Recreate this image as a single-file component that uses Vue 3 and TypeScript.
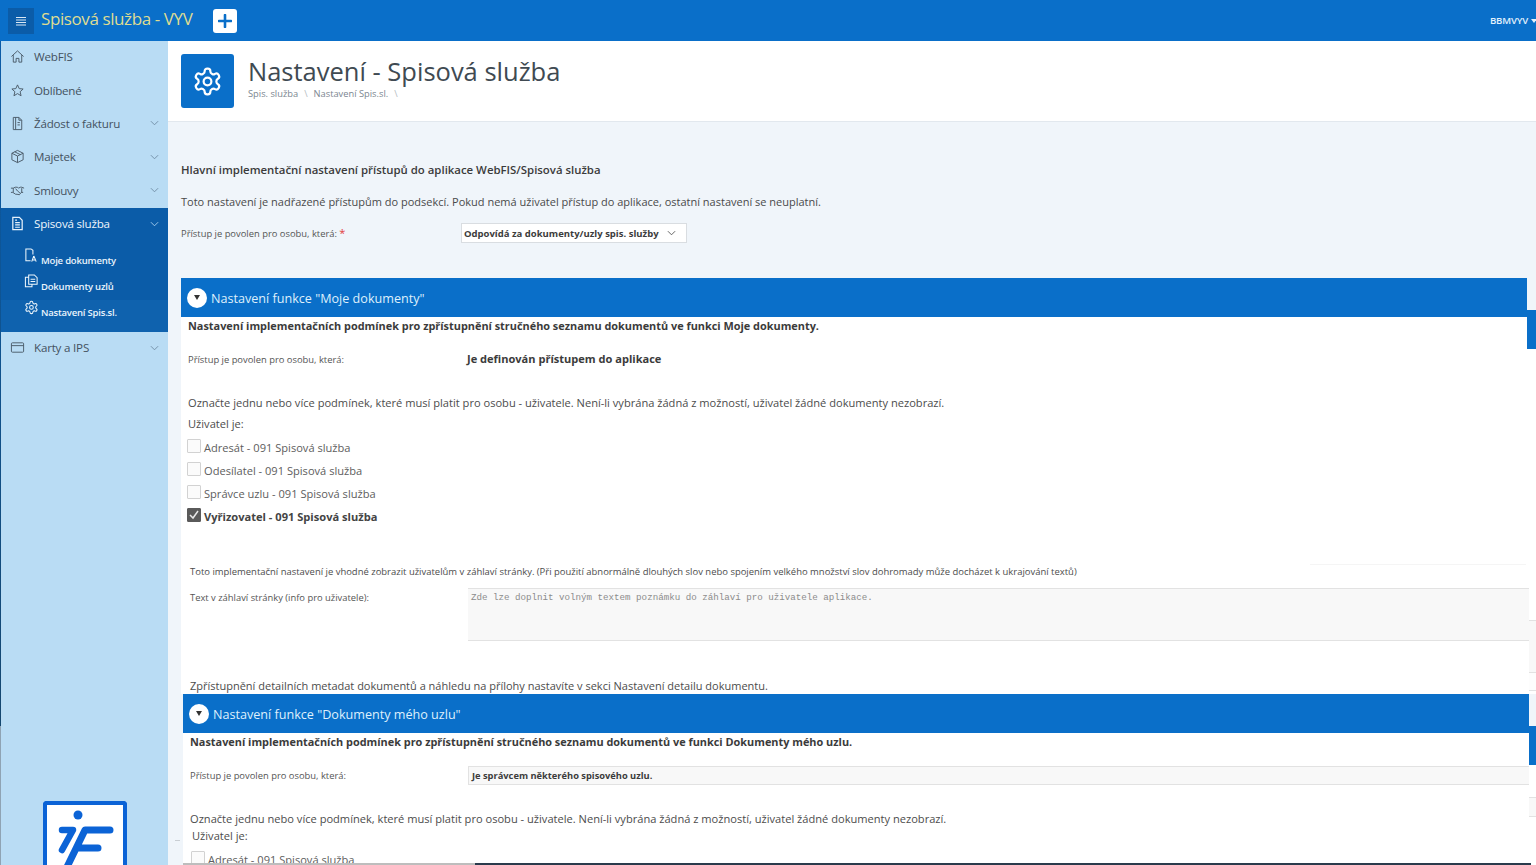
<script setup lang="ts">
interface MenuItem { label: string; icon: string; caret: boolean }
const topItems: MenuItem[] = [
  { label: 'WebFIS', icon: 'home', caret: false },
  { label: 'Oblíbené', icon: 'star', caret: false },
  { label: 'Žádost o fakturu', icon: 'invoice', caret: true },
  { label: 'Majetek', icon: 'box', caret: true },
  { label: 'Smlouvy', icon: 'hands', caret: true },
]
const subItems = [
  { label: 'Moje dokumenty', icon: 'docA', current: false },
  { label: 'Dokumenty uzlů', icon: 'docs', current: false },
  { label: 'Nastavení Spis.sl.', icon: 'gear', current: true },
]
const checks = [
  { label: 'Adresát - 091 Spisová služba', on: false },
  { label: 'Odesílatel - 091 Spisová služba', on: false },
  { label: 'Správce uzlu - 091 Spisová služba', on: false },
  { label: 'Vyřizovatel - 091 Spisová služba', on: true },
]
const gearPath = 'M12.22 2h-.44a2 2 0 0 0-2 2v.18a2 2 0 0 1-1 1.73l-.43.25a2 2 0 0 1-2 0l-.15-.08a2 2 0 0 0-2.73.73l-.22.38a2 2 0 0 0 .73 2.73l.15.1a2 2 0 0 1 1 1.72v.51a2 2 0 0 1-1 1.74l-.15.09a2 2 0 0 0-.73 2.73l.22.38a2 2 0 0 0 2.73.73l.15-.08a2 2 0 0 1 2 0l.43.25a2 2 0 0 1 1 1.73V20a2 2 0 0 0 2 2h.44a2 2 0 0 0 2-2v-.18a2 2 0 0 1 1-1.73l.43-.25a2 2 0 0 1 2 0l.15.08a2 2 0 0 0 2.73-.73l.22-.39a2 2 0 0 0-.73-2.73l-.15-.08a2 2 0 0 1-1-1.74v-.5a2 2 0 0 1 1-1.74l.15-.09a2 2 0 0 0 .73-2.73l-.22-.38a2 2 0 0 0-2.73-.73l-.15.08a2 2 0 0 1-2 0l-.43-.25a2 2 0 0 1-1-1.73V4a2 2 0 0 0-2-2zM12 9a3 3 0 1 0 0 6 3 3 0 0 0 0-6z'
</script>

<template>
  <div class="app">
    <header class="topbar">
      <button class="burger" aria-label="Menu">
        <svg width="12" height="10" viewBox="0 0 12 10"><path d="M1 1.500h10M1 4h10M1 6.500h10M1 9h10" stroke="#dbe8f4" stroke-width="1" /></svg>
      </button>
      <span class="brand">Spisová služba - VYV</span>
      <button class="plus" aria-label="Přidat">
        <svg width="14" height="14" viewBox="0 0 14 14"><path d="M7 1v12M1 7h12" stroke="#0a6fc9" stroke-width="2.600" stroke-linecap="round" /></svg>
      </button>
      <span class="user">BBMVYV <i class="user-caret"></i></span>
    </header>

    <div class="body">
      <aside class="side">
        <nav>
          <a v-for="item in topItems" :key="item.label" class="nav-item">
            <svg class="nav-icon" viewBox="0 0 16 16" fill="none" stroke="#4a5a68" stroke-width="1">
              <path v-if="item.icon === 'home'" d="M1.500 8 8 2l6.500 6M3.500 6.500V14h3v-4h3v4h3V6.500" />
              <path v-else-if="item.icon === 'star'" d="m8 2 1.800 4 4.200.4-3.200 2.900 1 4.300L8 11.300l-3.800 2.300 1-4.300L2 6.400 6.200 6z" />
              <path v-else-if="item.icon === 'invoice'" d="M3.500 1.500h6l3 3v10h-9zM6 1.500v13M9.500 1.500v3h3M8 7h2.500M8 9.500h2.500" />
              <path v-else-if="item.icon === 'box'" d="M8 1.500 14 4.500v7L8 14.500 2 11.500v-7zM2 4.500l6 3 6-3M8 7.500v7M5 3l6 3" />
              <path v-else d="M1 5.500h2.500l2-1h2.500l1 1 2-1h1.500l2.500 1M1 10h2l3 2h1.500l2.500.5 2-2.500h2M6 6l2 2.500 2.500 2M3.500 5.500V10M12.500 5.500V10" />
            </svg>
            <span>{{ item.label }}</span>
            <svg v-if="item.caret" class="nav-caret" viewBox="0 0 10 6" fill="none" stroke="#6f8ba3" stroke-width="1"><path d="m1 1 4 4 4-4" /></svg>
          </a>
          <div class="group">
            <a class="nav-item group-head">
              <svg class="nav-icon" viewBox="0 0 16 16" fill="none" stroke="#e8f2fb" stroke-width="1.300">
                <path d="M3 1.500h7l3 3v10H3zM5.500 7h5M5.500 9.500h5M5.500 12h5M5.500 4.500h2" />
              </svg>
              <span>Spisová služba</span>
              <svg class="nav-caret" viewBox="0 0 10 6" fill="none" stroke="#a9d0ee" stroke-width="1"><path d="m1 1 4 4 4-4" /></svg>
            </a>
            <a v-for="sub in subItems" :key="sub.label" class="sub-item" :class="{ current: sub.current }">
              <svg class="sub-icon" viewBox="0 0 16 16" fill="none" stroke="#eef6fc" stroke-width="1.100">
                <path v-if="sub.icon === 'docA'" d="M9.500 7V2.500l-2-1.500H2v12.500h5M10.500 8.500l-2.300 6M10.500 8.500l2.500 6M9 12.800h3.300" />
                <path v-else-if="sub.icon === 'docs'" d="M5 3.500H1.500v10h7V11M5 1h6l3 3v7H5zM7 5.500h5M7 8h5" />
                <path v-else transform="scale(.66)" :d="gearPath" stroke-width="1.700" />
              </svg>
              <span>{{ sub.label }}</span>
            </a>
          </div>
          <a class="nav-item">
            <svg class="nav-icon" viewBox="0 0 16 16" fill="none" stroke="#4a5a68" stroke-width="1"><rect x="1.500" y="3" width="13" height="10" rx="1" /><path d="M1.500 6h13" /></svg>
            <span>Karty a IPS</span>
            <svg class="nav-caret" viewBox="0 0 10 6" fill="none" stroke="#6f8ba3" stroke-width="1"><path d="m1 1 4 4 4-4" /></svg>
          </a>
        </nav>
        <div class="logo">
          <svg width="84" height="64" viewBox="0 0 84 64" fill="none">
            <circle cx="33" cy="10" r="4.500" fill="#0b63d6" />
            <path d="M17 25h11L17 45" stroke="#0b63d6" stroke-width="6.500" stroke-linecap="round" stroke-linejoin="round" />
            <path d="M65 25H40L22 62M33 43h20" stroke="#0b63d6" stroke-width="7" stroke-linecap="round" stroke-linejoin="round" />
          </svg>
        </div>
      </aside>

      <main class="main">
        <section class="page-head">
          <div class="head-icon">
            <svg width="31" height="31" viewBox="0 0 24 24" fill="none" stroke="#fff" stroke-width="1.700" stroke-linejoin="round"><path :d="gearPath" /></svg>
          </div>
          <div>
            <h1>Nastavení - Spisová služba</h1>
            <div class="crumbs"><span>Spis. služba</span><i>\</i><span>Nastavení Spis.sl.</span><i>\</i></div>
          </div>
        </section>

        <section class="content">
          <p class="lead">Hlavní implementační nastavení přístupů do aplikace WebFIS/Spisová služba</p>
          <p class="intro">Toto nastavení je nadřazené přístupům do podsekcí. Pokud nemá uživatel přístup do aplikace, ostatní nastavení se neuplatní.</p>
          <div class="access">
            <label class="small access-label">Přístup je povolen pro osobu, která: <em>*</em></label>
            <div class="select">
              <span>Odpovídá za dokumenty/uzly spis. služby</span>
              <svg width="9" height="6" viewBox="0 0 10 6" fill="none" stroke="#555" stroke-width="1"><path d="m1 1 4 4 4-4" /></svg>
            </div>
          </div>

          <article class="panel first">
            <i class="sliver"></i>
            <h2 class="panel-head"><span class="round"><i></i></span><span class="head-text">Nastavení funkce "Moje dokumenty"</span></h2>
            <div class="panel-body">
              <i class="hairline"></i>
              <i class="gutter gutter-a"></i>
              <i class="gutter gutter-b"></i>
              <p class="cond-title">Nastavení implementačních podmínek pro zpřístupnění stručného seznamu dokumentů ve funkci Moje dokumenty.</p>
              <div class="row">
                <span class="small row-label">Přístup je povolen pro osobu, která:</span>
                <strong class="row-value">Je definován přístupem do aplikace</strong>
              </div>
              <p class="hint">Označte jednu nebo více podmínek, které musí platit pro osobu - uživatele. Není-li vybrána žádná z možností, uživatel žádné dokumenty nezobrazí.</p>
              <p class="user-is">Uživatel je:</p>
              <label v-for="c in checks" :key="c.label" class="check" :class="{ on: c.on }">
                <span class="box">
                  <svg v-if="c.on" width="12" height="10" viewBox="0 0 12 10" fill="none" stroke="#e8e8e8" stroke-width="1.500"><path d="m2 5 3 3 5-7" /></svg>
                </span>
                {{ c.label }}
              </label>
              <p class="note">Toto implementační nastavení je vhodné zobrazit uživatelům v záhlaví stránky. (Při použití abnormálně dlouhých slov nebo spojením velkého množství slov dohromady může docházet k ukrajování textů)</p>
              <div class="row text-row">
                <span class="small row-label">Text v záhlaví stránky (info pro uživatele):</span>
                <div class="textarea">Zde lze doplnit volným textem poznámku do záhlaví pro uživatele aplikace.</div>
              </div>
              <p class="closing">Zpřístupnění detailních metadat dokumentů a náhledu na přílohy nastavíte v sekci Nastavení detailu dokumentu.</p>
            </div>
          </article>

          <article class="panel second">
            <i class="sliver"></i>
            <i class="tick"></i>
            <h2 class="panel-head"><span class="round"><i></i></span><span class="head-text">Nastavení funkce "Dokumenty mého uzlu"</span></h2>
            <div class="panel-body">
              <i class="gutter gutter-c"></i>
              <i class="edge"></i>
              <p class="cond-title">Nastavení implementačních podmínek pro zpřístupnění stručného seznamu dokumentů ve funkci Dokumenty mého uzlu.</p>
              <div class="row">
                <span class="small row-label">Přístup je povolen pro osobu, která:</span>
                <div class="readonly">Je správcem některého spisového uzlu.</div>
              </div>
              <p class="hint">Označte jednu nebo více podmínek, které musí platit pro osobu - uživatele. Není-li vybrána žádná z možností, uživatel žádné dokumenty nezobrazí.</p>
              <p class="user-is">Uživatel je:</p>
              <label class="check"><span class="box"></span>Adresát - 091 Spisová služba</label>
            </div>
          </article>
        </section>
      </main>
    </div>
  </div>
</template>

<style>
html, body { margin: 0; height: 100%; overflow: hidden; background: #fff; }
</style>

<style scoped>
.app { width: 1536px; height: 865px; overflow: hidden; display: flex; flex-direction: column; font-family: "Open Sans", "Noto Sans", sans-serif; color: #404040; }
p, h1, h2 { margin: 0; font-weight: normal; }
button { border: 0; padding: 0; display: flex; align-items: center; justify-content: center; }

.topbar { height: 41px; flex: none; background: #0a6fc9; display: flex; align-items: center; padding-left: 8px; }
.burger { width: 26px; height: 26px; background: #0b5ca8; }
.brand { margin: 0 0 4px 7px; font-size: 17px; letter-spacing: -.4px; color: #dfdc92; width: 172px; white-space: nowrap; }
.plus { width: 24px; height: 24px; background: #fff; border-radius: 3px; }
.user { margin-left: auto; font-size: 9.600px; font-weight: 600; letter-spacing: -.2px; color: #e3f1fc; display: flex; align-items: center; gap: 3px; white-space: nowrap; width: 46px; }
.user-caret { width: 0; height: 0; flex: none; border-left: 3.500px solid transparent; border-right: 3.500px solid transparent; border-top: 4px solid #e3f1fc; }

.body { flex: 1; min-height: 0; display: flex; }
.side { width: 167px; flex: none; background: #b9dcf4; border-left: 1px solid; border-image: linear-gradient(#0b5ca8 0, #15476f 83%, #8fa3b3 83%, #8fa3b3 100%) 1; display: flex; flex-direction: column; position: relative; overflow: hidden; }
.nav-item { height: 33.400px; box-sizing: border-box; padding: 0 0 2px 9px; display: flex; align-items: center; font-size: 11.600px; letter-spacing: -.2px; color: #44525f; }
.nav-icon { width: 15px; height: 15px; margin-right: 9px; flex: none; }
.nav-caret { width: 9px; height: 6px; margin-left: auto; margin-right: 9px; }
.group { background: #0b5ca8; height: 124px; display: flex; flex-direction: column; }
.group-head { color: #eef6fc; height: 34px; flex: none; margin-bottom: 6px; }
.sub-item { display: flex; height: 26px; flex: none; padding-left: 23px; align-items: flex-start; font-size: 9.500px; font-weight: 600; line-height: 13px; letter-spacing: -.2px; color: #eaf4fc; box-sizing: border-box; }
.sub-item span { margin-top: 6px; }
.sub-item.current { background: #0f62ae; height: 32px; }
.sub-icon { width: 15px; height: 15px; margin: 0 2px 0 0; flex: none; }
.logo { position: absolute; left: 42px; top: 760px; width: 76px; height: 70px; border: 4px solid #0b63d6; border-bottom: 0; border-radius: 4px 4px 0 0; background: #fff; overflow: hidden; }
.logo svg { margin: 0 0 0 -2px; display: block; }

.main { flex: 1; min-width: 0; display: flex; flex-direction: column; background: #f0f5fa; }
.page-head { height: 81px; flex: none; box-sizing: border-box; background: #fff; border-bottom: 1px solid #e2e8ee; display: flex; padding: 13px 0 0 13px; gap: 14px; }
.head-icon { width: 53px; height: 54px; border-radius: 3px; background: #0a6fc9; display: flex; align-items: center; justify-content: center; }
h1 { font-size: 25.500px; line-height: 34px; color: #404a52; white-space: nowrap; }
.crumbs { font-size: 9.300px; color: #7b8690; display: flex; gap: 6px; line-height: 12px; margin-top: 0; }
.crumbs i { font-style: normal; color: #b5bcc2; }

.content { flex: 1; min-height: 0; padding: 41px 9px 0 13px; display: flex; flex-direction: column; }
.lead { font-size: 11.400px; font-weight: 600; line-height: 14px; color: #3b3b3b; white-space: nowrap; }
.intro { font-size: 11px; margin-top: 18px; line-height: 14px; color: #4a4a4a; white-space: nowrap; }
.access { display: flex; align-items: center; margin-top: 14px; height: 20px; }
.small { font-size: 9.400px; color: #555; white-space: nowrap; }
.access-label { width: 280px; flex: none; position: relative; top: -1px; }
.access-label em { color: #e23b3b; font-style: normal; font-size: 11px; }
.select { width: 226px; height: 20px; box-sizing: border-box; border: 1px solid #d9dde1; background: #fff; display: flex; align-items: center; justify-content: space-between; padding: 0 10px 0 2px; font-size: 9.500px; font-weight: 700; color: #3c3c3c; white-space: nowrap; }

.panel { position: relative; flex: none; }
.first { margin-top: 35px; height: 416px; }
.second { margin: 0 -2px 0 2px; height: 171px; }
.panel-head { height: 39px; background: #0a6fc9; color: #dff0fc; font-size: 12.600px; display: flex; align-items: center; box-sizing: border-box; padding-left: 6px; gap: 4px; white-space: nowrap; }
.head-text { margin-top: 2px; }
.round { width: 20px; height: 20px; flex: none; background: #fff; border-radius: 50%; display: flex; align-items: center; justify-content: center; }
.round i { width: 0; height: 0; border-left: 3.500px solid transparent; border-right: 3.500px solid transparent; border-top: 5px solid #333; }
.panel-body { position: relative; background: #fff; margin-right: -9px; padding: 0 0 0 7px; height: calc(100% - 39px); box-sizing: border-box; overflow: hidden; }
.second .panel-body { margin-right: -7px; }
.sliver { position: absolute; right: -9px; top: 32px; width: 9px; height: 39px; background: #0a6fc9; z-index: 1; }
.second .sliver { right: -7px; width: 7px; }
.tick { position: absolute; left: -8px; top: 146px; width: 5px; height: 1px; background: #c9ced3; }
.hairline { position: absolute; right: 10px; top: 247px; width: 216px; height: 1px; background: #f5f5f5; }
.gutter { position: absolute; right: 0; width: 7px; box-sizing: border-box; border-top: 1px solid #e2e2e2; border-bottom: 1px solid #e2e2e2; background: #f8f8f8; }
.gutter-a { top: 303px; height: 53px; }
.gutter-b { top: 355px; height: 19px; background: #fdfdfd; }
.gutter-c { top: 64px; height: 20px; }
.edge { position: absolute; left: 0; right: 5px; bottom: 0; height: 2px; background: linear-gradient(to right, #bdbdbd 0 292px, #2a3a4c 292px); z-index: 1; }
.cond-title { font-size: 10.900px; font-weight: 700; line-height: 14px; padding-top: 2px; color: #3b3b3b; white-space: nowrap; }
.row { display: flex; margin-top: 18px; height: 17px; align-items: center; }
.row-label { width: 279px; flex: none; }
.row-value { font-size: 11.050px; font-weight: 700; color: #3b3b3b; position: relative; top: -1px; }
.hint { font-size: 11.100px; margin-top: 28px; line-height: 14px; white-space: nowrap; color: #4c4c4c; }
.user-is { font-size: 11.100px; margin-top: 7px; line-height: 14px; color: #4c4c4c; }
.check { display: flex; align-items: center; gap: 3px; height: 23px; margin-left: -1px; font-size: 11.100px; color: #5d5d5d; white-space: nowrap; }
.user-is + .check { margin-top: 5px; }
.box { width: 14px; height: 14px; box-sizing: border-box; border: 1px solid #d2d2d2; background: #fbfbfb; border-radius: 1px; display: flex; align-items: center; justify-content: center; position: relative; top: -2px; }
.check.on { font-weight: 700; color: #444; }
.check.on .box { background: #5a5a5a; border-color: #5a5a5a; }
.note { font-size: 9.460px; margin: 38px 0 0 2px; line-height: 12px; white-space: nowrap; color: #4c4c4c; }
.text-row { margin: 10px 0 0 2px; height: 53px; align-items: flex-start; }
.text-row .row-label { width: 278px; padding-top: 3px; }
.textarea { flex: 1; height: 53px; margin-right: 7px; box-sizing: border-box; background: #f8f8f8; border-top: 1px solid #e2e2e2; border-bottom: 1px solid #e2e2e2; padding: 3px; font-family: "Liberation Mono", monospace; font-size: 9.180px; color: #8c8c8c; white-space: nowrap; }
.closing { font-size: 11px; margin: 38px 0 0 2px; line-height: 14px; white-space: nowrap; color: #4c4c4c; }
.second .row { margin-top: 16px; height: 20px; }
.second .row-label { width: 278px; }
.readonly { flex: 1; height: 19px; margin-right: 7px; box-sizing: border-box; border-top: 1px solid #e2e2e2; border-bottom: 1px solid #e2e2e2; border-left: 1px solid #e2e2e2; background: #f8f8f8; font-size: 9.300px; font-weight: 700; padding: 0 3px; line-height: 17px; color: #3c3c3c; }
.second .hint { margin-top: 27px; }
.second .user-is { margin: 3px 0 0 2px; }
.second .check { margin-left: 1px; }
</style>
